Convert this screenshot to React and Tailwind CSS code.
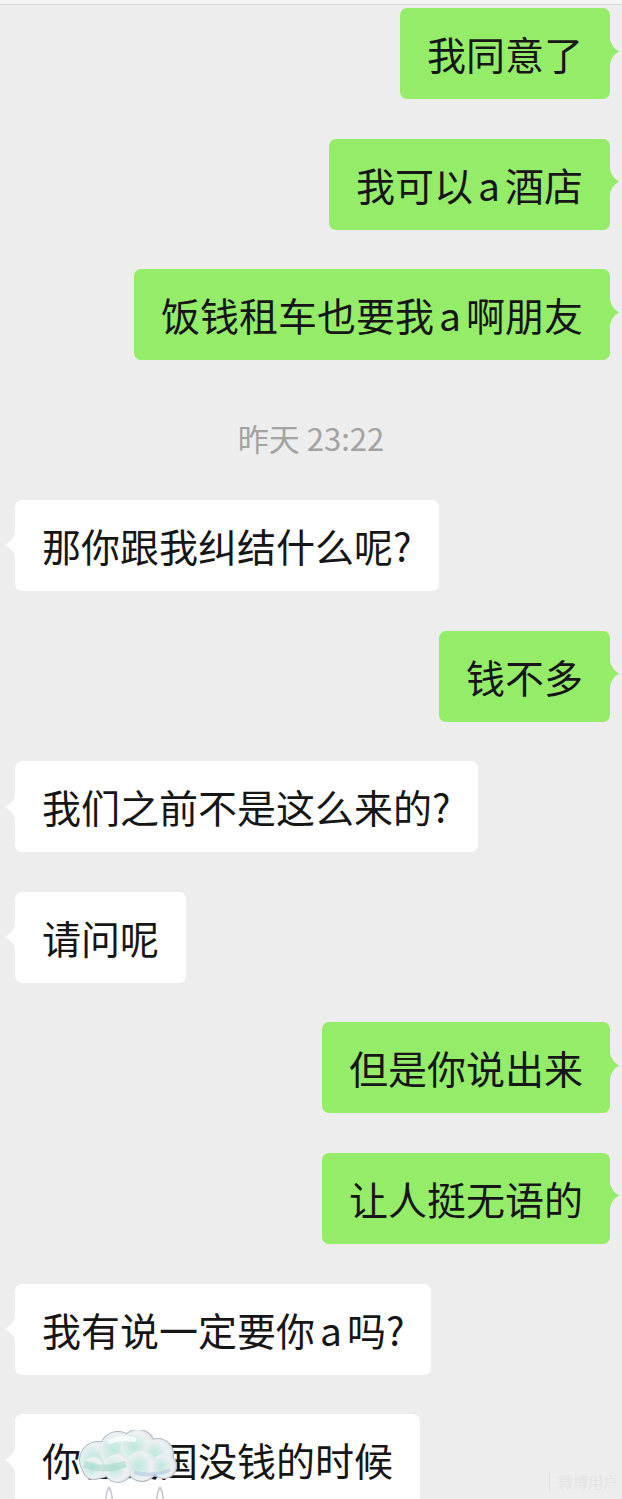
import React from "react";

const FONT = { fontFamily: '"Noto Sans CJK SC", "Noto Sans", sans-serif' };

function Tail({ me }) {
  return me ? (
    <svg
      width="9"
      height="24"
      viewBox="0 0 9 24"
      className="absolute left-full top-1/2 -translate-y-[60%]"
    >
      <path d="M0 0 Q2 8 9 12 Q2 16 0 24 Z" fill="#95ec69" />
    </svg>
  ) : (
    <svg
      width="10"
      height="24"
      viewBox="0 0 10 24"
      className="absolute right-full top-1/2 -translate-y-1/2"
    >
      <path d="M10 0 Q8 8 0 12 Q8 16 10 24 Z" fill="#ffffff" />
    </svg>
  );
}

function Bubble({ me, children, extra }) {
  return (
    <div className={me ? "flex justify-end pr-[12px]" : "flex justify-start pl-[15px]"}>
      <div
        className={`relative rounded-[7px] px-[27px] py-[18px] text-[39px] leading-[55px] whitespace-nowrap text-[#161616] ${
          me ? "bg-[#95ec69]" : "bg-white"
        }`}
      >
        {children}
        <Tail me={me} />
        {extra}
      </div>
    </div>
  );
}

const A = () => <span className="mx-[5px]">a</span>;

// the sticker blob covering part of the last message
function Cloud() {
  const puffs = [
    [20, 30, 18],
    [40, 20, 18],
    [60, 17, 17],
    [80, 24, 15],
    [86, 36, 12],
    [64, 36, 15],
    [40, 38, 14],
    [16, 38, 11],
  ];
  return (
    <svg
      width="104"
      height="72"
      viewBox="0 0 104 72"
      className="absolute left-[63px] top-[16px]"
    >
      <defs>
        <radialGradient id="cg" cx="38%" cy="50%" r="60%">
          <stop offset="0%" stopColor="#bfe6dc" />
          <stop offset="40%" stopColor="#d6ece8" />
          <stop offset="75%" stopColor="#eef1f3" />
          <stop offset="100%" stopColor="#dfe5ea" />
        </radialGradient>
      </defs>
      <g fill="#aeb8c2">
        {puffs.map(([x, y, r], i) => (
          <circle key={i} cx={x} cy={y} r={r + 1} />
        ))}
      </g>
      <g fill="url(#cg)">
        {puffs.map(([x, y, r], i) => (
          <circle key={i} cx={x} cy={y} r={r} />
        ))}
      </g>
      <path d="M6 34 Q26 42 48 34" stroke="#a6d9cc" strokeWidth="7" fill="none" opacity="0.55" />
      <path d="M56 42 Q72 48 92 40" stroke="#b5c6e0" strokeWidth="4" fill="none" opacity="0.6" />
      <path d="M30 12 Q44 6 58 10" stroke="#ffffff" strokeWidth="5" fill="none" opacity="0.7" />
      <g fill="none" stroke="#c3c9cf" strokeWidth="1.6">
        <path d="M31 57 Q27 64 28 72 M31 57 Q35 64 34 72" />
        <path d="M82 57 Q78 64 79 72 M82 57 Q86 64 85 72" />
      </g>
    </svg>
  );
}

export default function App() {
  return (
    <div className="relative h-[1499px] w-full overflow-hidden bg-[#ededed]" style={FONT}>
      <div className="h-[4px] bg-[#f3f3f3]" />
      <div className="h-px bg-[#dadada]" />
      <div className="flex flex-col gap-[39.6px] pt-[3px]">
        <Bubble me>我同意了</Bubble>
        <Bubble me>
          我可以<A />酒店
        </Bubble>
        <Bubble me>
          饭钱租车也要我<A />啊朋友
        </Bubble>

        <div className="mt-[19px] mb-[4.6px] text-center text-[31px] leading-[37px] text-[#a3a3a3]">
          昨天 23:22
        </div>

        <Bubble>那你跟我纠结什么呢?</Bubble>
        <Bubble me>钱不多</Bubble>
        <Bubble>我们之前不是这么来的?</Bubble>
        <Bubble>请问呢</Bubble>
        <Bubble me>但是你说出来</Bubble>
        <Bubble me>让人挺无语的</Bubble>
        <Bubble>
          我有说一定要你<A />吗?
        </Bubble>
        <Bubble extra={<Cloud />}>你在美国没钱的时候</Bubble>
      </div>

      <div className="absolute bottom-[6px] right-[4px] flex items-center gap-[8px] text-[15px] text-[#e4e4e4]">
        <span className="h-[22px] w-px bg-[#e2e2e2]" />
        <span>微博用户</span>
      </div>
    </div>
  );
}
